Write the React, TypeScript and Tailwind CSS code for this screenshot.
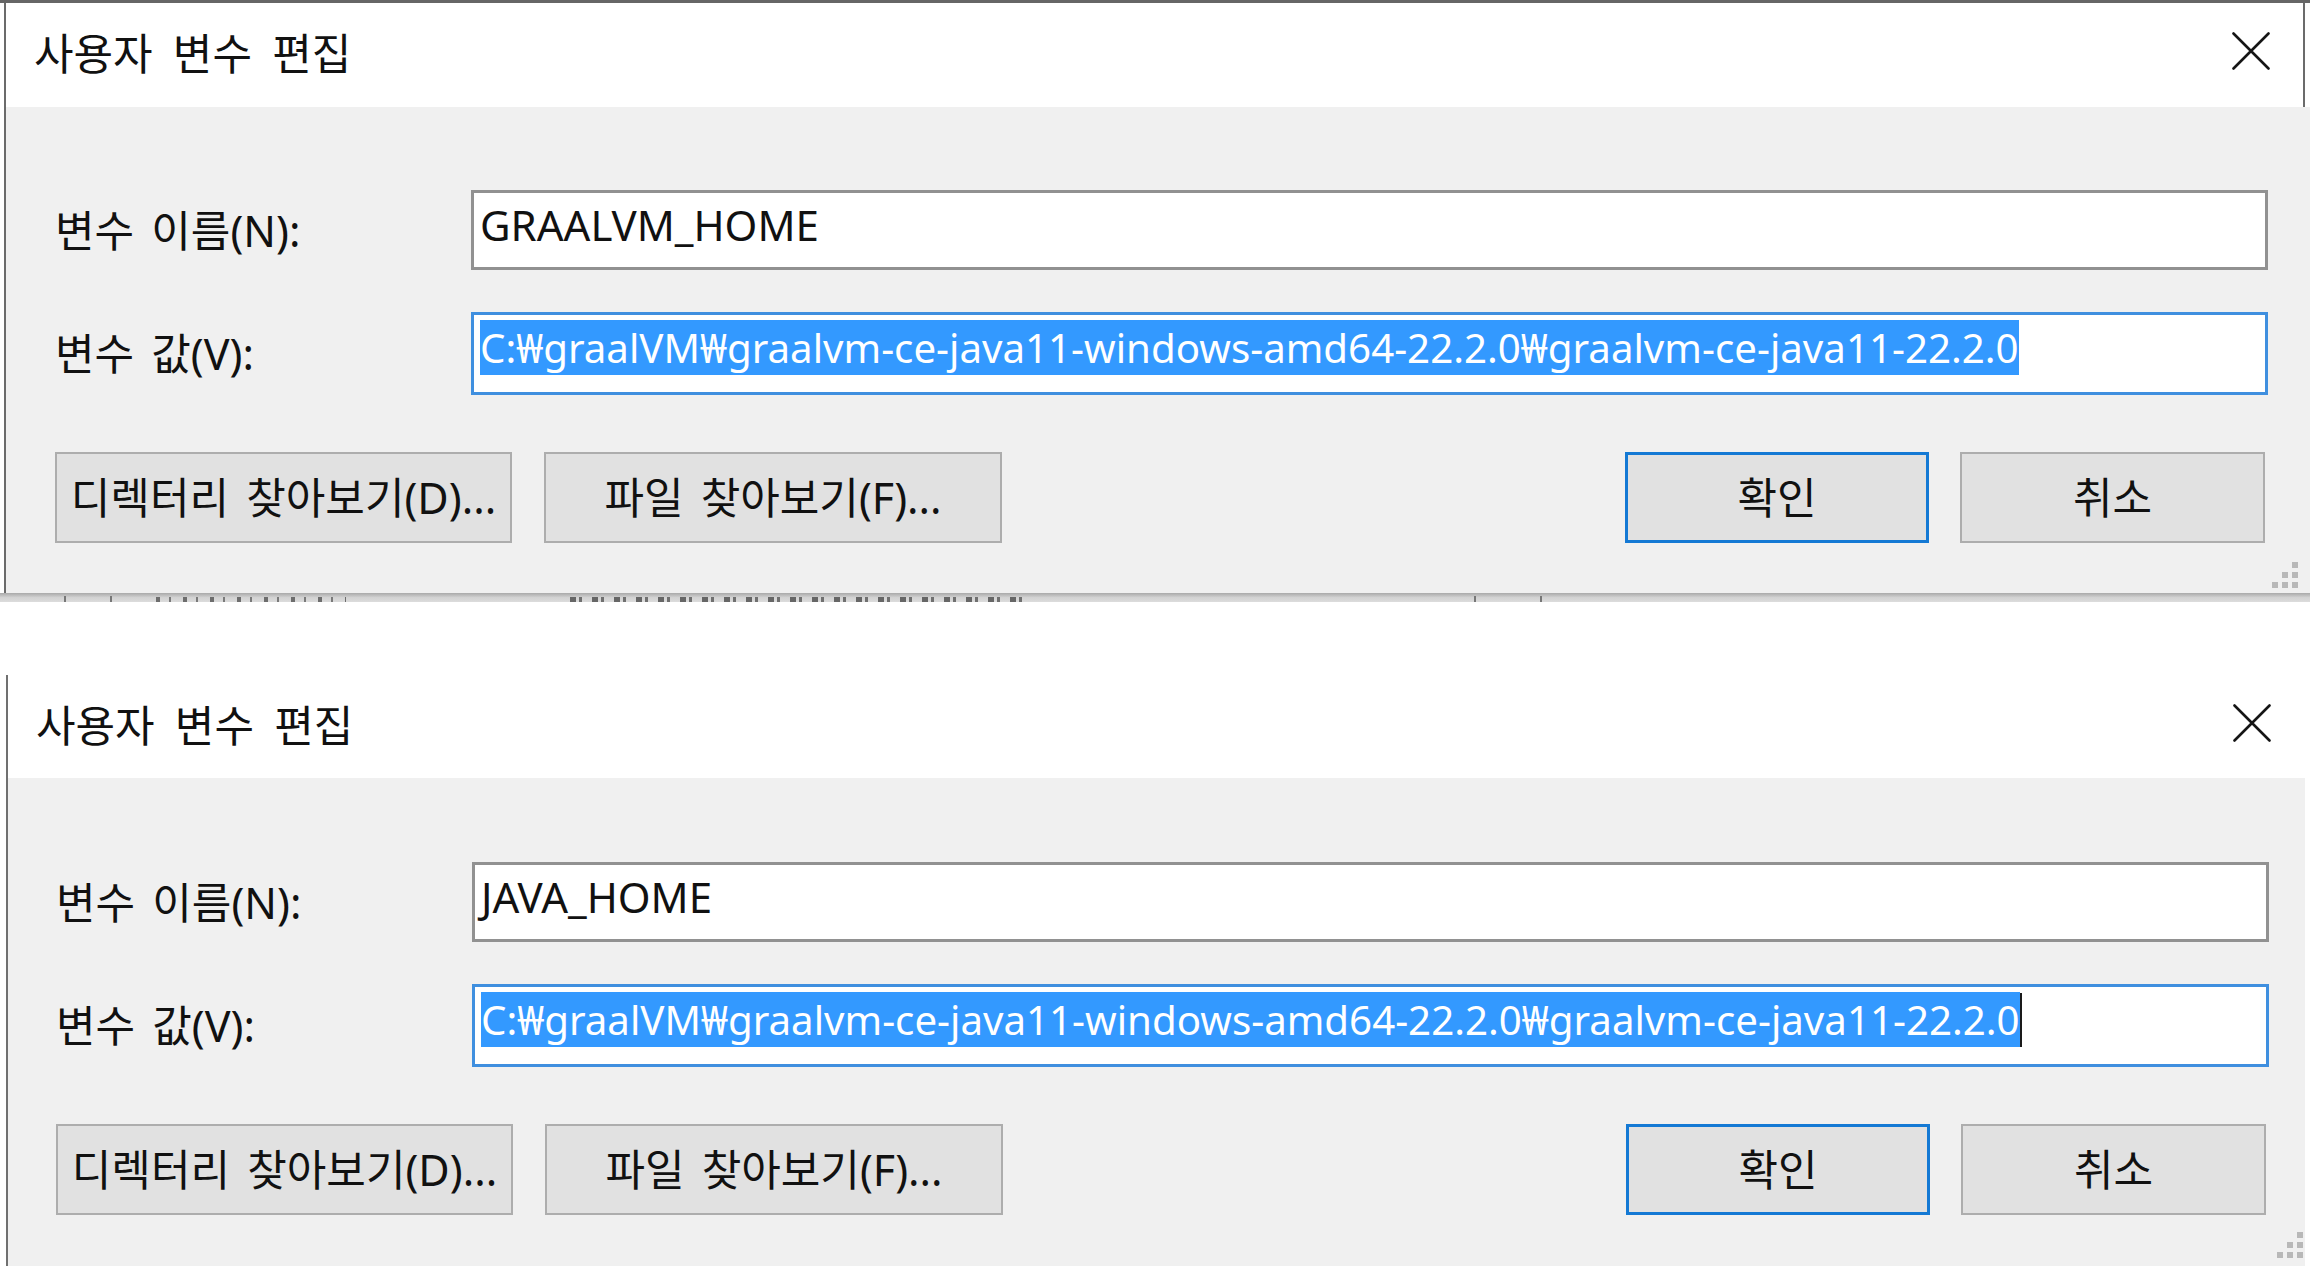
import React from "react";

const VALUE = "C:₩graalVM₩graalvm-ce-java11-windows-amd64-22.2.0₩graalvm-ce-java11-22.2.0";

function CloseIcon() {
  return (
    <svg width="38" height="38" viewBox="0 0 38 38" fill="none" aria-hidden>
      <path d="M1.5 1.5 L36.5 36.5 M36.5 1.5 L1.5 36.5" stroke="#151515" strokeWidth="2.6" strokeLinecap="round" />
    </svg>
  );
}

// windows sizing grip: 1 / 2 / 3 dots
function SizeGrip() {
  const dots = [
    [22, 2],
    [22, 12],
    [12, 12],
    [22, 22],
    [12, 22],
    [2, 22],
  ];
  return (
    <svg width="30" height="30" viewBox="0 0 30 30" aria-hidden>
      {dots.map(([x, y]) => (
        <rect key={`${x}-${y}`} x={x} y={y} width="6" height="6" fill="#b8b8b8" />
      ))}
    </svg>
  );
}

function EditDialog({ name, second }: { name: string; second?: boolean }) {
  return (
    <section className={second ? "ml-[6px] border-l-2 border-[#707070]" : "ml-[4px] border-l-2 border-[#6b6b6b]"}>
      <header
        className={
          second
            ? "flex h-[103px] items-center justify-between bg-white pb-[2px] pl-[28px] pr-[39px]"
            : "mr-[5px] flex h-[104px] items-center justify-between border-r-2 border-[#6b6b6b] bg-white pb-[3px] pl-[28px] pr-[33px]"
        }
      >
        <h1 className="text-[43px] font-normal leading-none text-[#111111] [word-spacing:9px]">사용자 변수 편집</h1>
        <div className="mb-[5px]">
          <CloseIcon />
        </div>
      </header>

      <div
        className={
          second
            ? "relative mr-[5px] h-[488px] bg-[#f0f0f0] pl-[48px] pt-[84px]"
            : "relative h-[486px] bg-[#f0f0f0] pl-[49px] pt-[83px]"
        }
      >
        <div className="flex w-[2213px] items-center">
          <label className="w-[416px] whitespace-nowrap text-[43px] leading-none text-[#111111] [word-spacing:6px]">
            변수 이름(N):
          </label>
          <div className="h-[80px] w-[1797px] border-[3px] border-[#919191] bg-white pl-[6px] pt-[4px]">
            <span className="whitespace-nowrap text-[42px] leading-[56px] text-[#111111]">{name}</span>
          </div>
        </div>

        <div className="mt-[42px] flex w-[2213px] items-center">
          <label className="w-[416px] whitespace-nowrap text-[43px] leading-none text-[#111111] [word-spacing:6px]">
            변수 값(V):
          </label>
          <div className="h-[83px] w-[1797px] border-[3px] border-[#3f8fdf] bg-white pl-[6px] pt-[6px]">
            <span className="whitespace-nowrap text-[40.25px] leading-[54px]">
              <span className="bg-[#3399ff] text-white">{VALUE}</span>
              {second && <span className="inline-block h-[54px] w-[2px] bg-[#1a1a1a] align-[-12px]" />}
            </span>
          </div>
        </div>

        <div className="mt-[57px] flex w-[2213px] items-center text-[#111111]">
          <div className="flex gap-[32px]">
            <button className="flex h-[91px] w-[457px] items-center justify-center whitespace-nowrap border-2 border-[#adadad] bg-[#e1e1e1] text-[43px] leading-none [word-spacing:6px]">
              디렉터리 찾아보기(D)...
            </button>
            <button className="flex h-[91px] w-[458px] items-center justify-center whitespace-nowrap border-2 border-[#adadad] bg-[#e1e1e1] text-[43px] leading-none [word-spacing:6px]">
              파일 찾아보기(F)...
            </button>
          </div>
          <div className="ml-auto mr-[3px] flex gap-[31px]">
            <button className="flex h-[91px] w-[304px] items-center justify-center border-[3px] border-[#1479d4] bg-[#e1e1e1] text-[43px] leading-none">
              확인
            </button>
            <button className="flex h-[91px] w-[305px] items-center justify-center border-2 border-[#adadad] bg-[#e1e1e1] text-[43px] leading-none">
              취소
            </button>
          </div>
        </div>

        <div className={second ? "absolute bottom-[6px] right-0" : "absolute bottom-[3px] right-[10px]"}>
          <SizeGrip />
        </div>
      </div>
    </section>
  );
}

export default function App() {
  return (
    <div className="h-[1266px] w-[2310px] overflow-hidden bg-white font-['Noto_Sans','Noto_Sans_CJK_KR',sans-serif] text-black">
      <div className="h-[3px] bg-[#666666]" />
      <EditDialog name="GRAALVM_HOME" />

      {/* edge of the window behind the dialogs */}
      <div className="h-[9px] bg-gradient-to-b from-[#a9a9a9] via-[#d2d2d2] to-[#dcdcdc]">
        <div className="flex h-full items-end gap-[44px] pl-[64px]">
          <span className="h-[6px] w-[2px] bg-[#777777]" />
          <span className="h-[6px] w-[2px] bg-[#777777]" />
          <span className="h-[5px] w-[190px] bg-[repeating-linear-gradient(90deg,#6d6d6d_0_4px,transparent_4px_13px,#7a7a7a_13px_15px,transparent_15px_27px)]" />
          <span className="ml-[180px] h-[5px] w-[460px] bg-[repeating-linear-gradient(90deg,#666666_0_6px,transparent_6px_9px,#707070_9px_12px,transparent_12px_22px)]" />
          <span className="ml-[400px] h-[6px] w-[2px] bg-[#777777]" />
          <span className="ml-[20px] h-[6px] w-[2px] bg-[#777777]" />
        </div>
      </div>

      <div className="h-[73px]" />
      <EditDialog name="JAVA_HOME" second />
    </div>
  );
}
